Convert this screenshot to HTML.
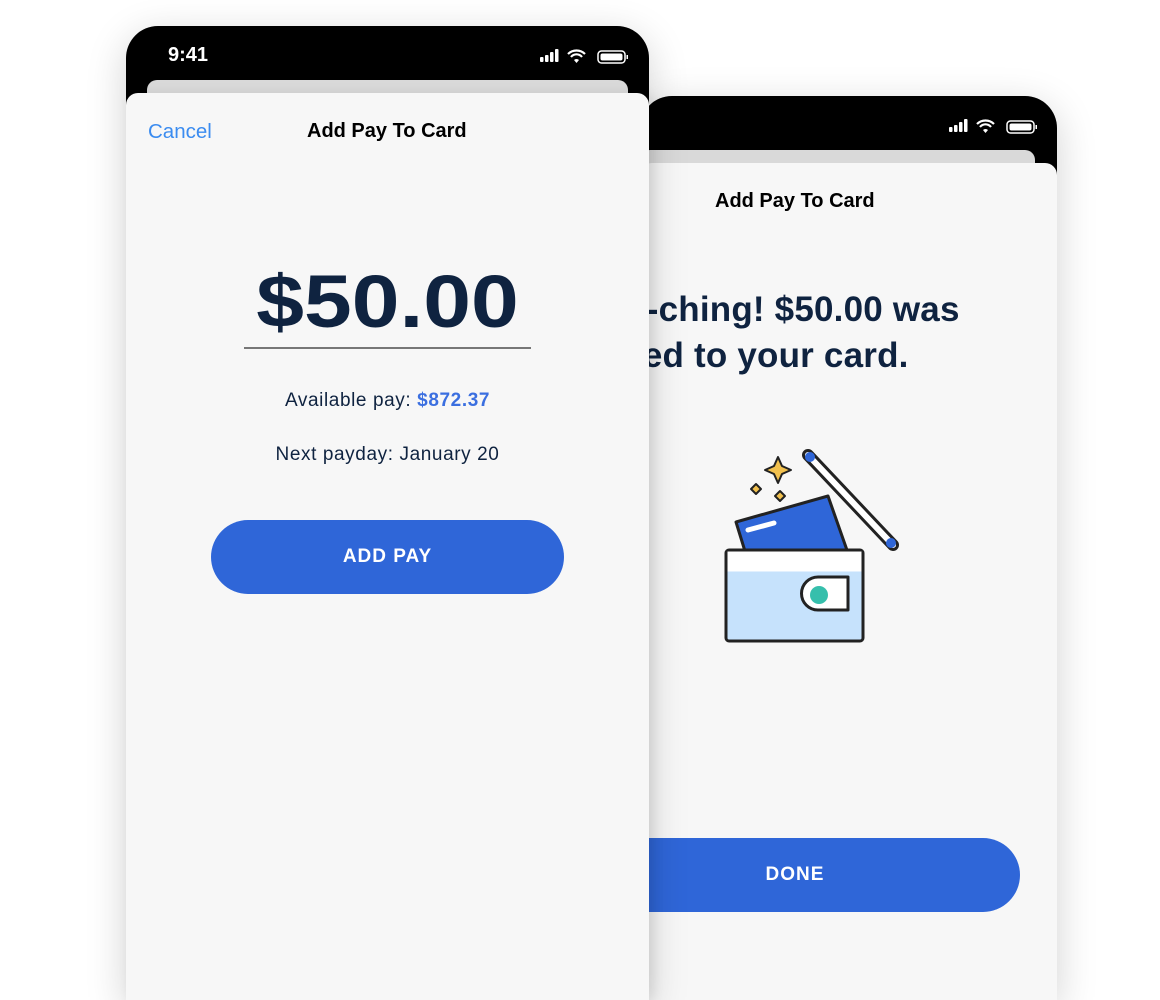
<!DOCTYPE html><html><head><style>
*{margin:0;padding:0;box-sizing:border-box}
body{width:1160px;height:1000px;background:#fff;position:relative;overflow:hidden;font-family:"Liberation Sans",sans-serif}
.ph{position:absolute;background:#000;border-radius:32px 32px 0 0;box-shadow:0 10px 40px rgba(0,0,0,.18)}
.bar{position:absolute;background:#d9d9d9;border-radius:10px 10px 0 0}
.card{position:absolute;background:#f7f7f7;border-radius:12px 12px 0 0}
.t{position:absolute;white-space:nowrap}
</style></head><body>
<!-- back phone -->
<div class="ph" style="left:640px;top:96px;width:417px;height:904px"></div>
<div class="bar" style="left:640px;top:150px;width:395px;height:20px"></div>
<div class="card" style="left:640px;top:163px;width:417px;height:837px"></div>
<svg class="t" style="left:947px;top:118px" width="92" height="18" viewBox="0 0 92 18">
<rect x="2" y="9" width="3.5" height="5" rx="1" fill="#fff"/><rect x="7" y="7" width="3.5" height="7" rx="1" fill="#fff"/><rect x="12" y="4" width="3.5" height="10" rx="1" fill="#fff"/><rect x="17" y="1" width="3.5" height="13" rx="1" fill="#fff"/>
<path d="M30 6a12 12 0 0 1 17 0M33 9a7 7 0 0 1 11 0" stroke="#fff" stroke-width="2.2" fill="none"/><path d="M36 12l2.5 3 2.5-3a3.5 3.5 0 0 0-5 0z" fill="#fff"/>
<rect x="60" y="3" width="27" height="12" rx="3.5" stroke="#fff" stroke-width="1.5" fill="none"/><rect x="62.5" y="5.5" width="22" height="7" rx="2" fill="#fff"/><rect x="88.5" y="7" width="1.5" height="4" fill="#fff"/>
</svg>
<div class="t" style="left:715px;top:190px;font-size:20px;font-weight:bold;color:#000">Add Pay To Card</div>
<div class="t" style="left:580px;top:287px;font-size:35px;font-weight:bold;color:#0f2340;line-height:46px;letter-spacing:0.2px">Cha-ching! $50.00 was<br>added to your card.</div>
<svg class="t" style="left:700px;top:430px" width="220" height="230" viewBox="700 430 220 230">
<g stroke="#222" stroke-width="3" stroke-linejoin="round">
<path d="M778 457l4 9 9 4-9 4-4 9-4-9-9-4 9-4z" fill="#f2c14e" stroke-width="2"/>
<path d="M756 484l5 5-5 5-5-5z" fill="#f2c14e" stroke-width="2"/>
<path d="M780 491l5 5-5 5-5-5z" fill="#f2c14e" stroke-width="2"/>
<line x1="808" y1="455" x2="893" y2="545" stroke="#222" stroke-width="12" stroke-linecap="round"/>
<line x1="808" y1="455" x2="893" y2="545" stroke="#fff" stroke-width="6" stroke-linecap="round"/>
<circle cx="810" cy="457" r="5" fill="#2f66d8" stroke="none"/><circle cx="891" cy="543" r="5" fill="#2f66d8" stroke="none"/>
<path d="M736 522l92-26 20 57-100 8z" fill="#2f66d8"/>
<line x1="748" y1="530" x2="774" y2="523" stroke="#fff" stroke-width="5" stroke-linecap="round"/>
<rect x="726" y="550" width="137" height="91" rx="3" fill="#c6e2fc"/>
<rect x="727.5" y="551.5" width="134" height="20" fill="#fff" stroke="none"/>
<path d="M848 577h-30a16 16 0 0 0 0 33h30z" fill="#fff"/>
<circle cx="819" cy="595" r="9" fill="#36bfac" stroke="none"/>
</g></svg>
<div class="t" style="left:570px;top:838px;width:450px;height:74px;border-radius:37px;background:#2f66d8;color:#fff;font-size:19px;font-weight:bold;text-align:center;line-height:74px;letter-spacing:1px">DONE</div>
<!-- front phone -->
<div class="ph" style="left:126px;top:26px;width:523px;height:974px"></div>
<div class="bar" style="left:147px;top:80px;width:481px;height:20px"></div>
<div class="card" style="left:126px;top:93px;width:523px;height:907px;box-shadow:4px 0 12px rgba(0,0,0,.08)"></div>
<div class="t" style="left:168px;top:44px;font-size:20px;font-weight:bold;color:#fff">9:41</div>
<svg class="t" style="left:538px;top:48px" width="92" height="18" viewBox="0 0 92 18">
<rect x="2" y="9" width="3.5" height="5" rx="1" fill="#fff"/><rect x="7" y="7" width="3.5" height="7" rx="1" fill="#fff"/><rect x="12" y="4" width="3.5" height="10" rx="1" fill="#fff"/><rect x="17" y="1" width="3.5" height="13" rx="1" fill="#fff"/>
<path d="M30 6a12 12 0 0 1 17 0M33 9a7 7 0 0 1 11 0" stroke="#fff" stroke-width="2.2" fill="none"/><path d="M36 12l2.5 3 2.5-3a3.5 3.5 0 0 0-5 0z" fill="#fff"/>
<rect x="60" y="3" width="27" height="12" rx="3.5" stroke="#fff" stroke-width="1.5" fill="none"/><rect x="62.5" y="5.5" width="22" height="7" rx="2" fill="#fff"/><rect x="88.5" y="7" width="1.5" height="4" fill="#fff"/>
</svg>
<div class="t" style="left:148px;top:120px;font-size:20.5px;color:#3b8cf0">Cancel</div>
<div class="t" style="left:307px;top:120px;font-size:20px;font-weight:bold;color:#000">Add Pay To Card</div>
<div class="t" style="left:244px;top:260px;width:287px;text-align:center;font-size:74px;font-weight:bold;color:#0f2340;line-height:84px;transform:scaleX(1.16)">$50.00</div>
<div class="t" style="left:244px;top:347px;width:287px;height:1.5px;background:#777"></div>
<div class="t" style="left:126px;top:390px;width:523px;text-align:center;font-size:19px;color:#0f2340;letter-spacing:0.6px">Available pay: <span style="color:#3b6fe0;font-weight:bold">$872.37</span></div>
<div class="t" style="left:126px;top:444px;width:523px;text-align:center;font-size:19px;color:#0f2340;letter-spacing:0.6px">Next payday: January 20</div>
<div class="t" style="left:211px;top:520px;width:353px;height:74px;border-radius:37px;background:#2f66d8;color:#fff;font-size:19px;font-weight:bold;text-align:center;line-height:74px;letter-spacing:1px">ADD PAY</div>
</body></html>
